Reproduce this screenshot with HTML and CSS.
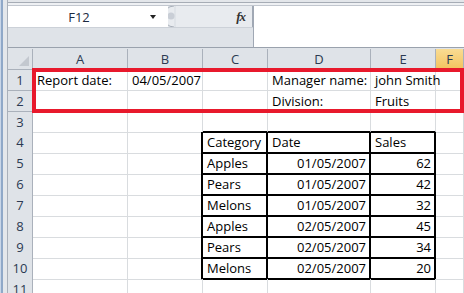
FILE: index.html
```html
<!DOCTYPE html>
<html>
<head>
<meta charset="utf-8">
<link rel="stylesheet" href="styles.css">
</head>
<body>
<div class="app">
  <div class="topstrip"></div>
  <div class="fbar">
    <div class="fleft">
      <div class="frow">
        <div class="namebox"><span class="nametext">F12</span><span class="ddarrow"></span></div>
        <svg class="grip" width="14" height="21" viewBox="0 0 14 21"><path d="M12 0 A10 10 0 0 0 12 21" fill="#e8ebef" stroke="#a9b0ba" stroke-width="1"/><circle cx="9" cy="10" r="3.5" fill="#c9ced6"/></svg>
        <div class="fxzone"><span class="fx">fx</span></div>
      </div>
      <div class="frow2"></div>
    </div>
    <div class="finput"></div>
  </div>
  <div class="sheet">
    <div class="row hdr">
      <div class="corner"><span class="tri"></span></div>
      <div class="ch">A</div><div class="ch">B</div><div class="ch">C</div><div class="ch">D</div><div class="ch">E</div><div class="ch sel">F</div>
    </div>
    <div class="row"><div class="rh">1</div><div class="c">Report date:</div><div class="c">04/05/2007</div><div class="c"></div><div class="c">Manager name:</div><div class="c">john Smith</div><div class="c"></div></div>
    <div class="row"><div class="rh">2</div><div class="c"></div><div class="c"></div><div class="c"></div><div class="c">Division:</div><div class="c">Fruits</div><div class="c"></div></div>
    <div class="row r3"><div class="rh">3</div><div class="c"></div><div class="c"></div><div class="c bb"></div><div class="c bb"></div><div class="c bb"></div><div class="c"></div></div>
    <div class="row"><div class="rh">4</div><div class="c"></div><div class="c br"></div><div class="c t">Category</div><div class="c t">Date</div><div class="c t">Sales</div><div class="c"></div></div>
    <div class="row"><div class="rh">5</div><div class="c"></div><div class="c br"></div><div class="c t">Apples</div><div class="c t n">01/05/2007</div><div class="c t n">62</div><div class="c"></div></div>
    <div class="row"><div class="rh">6</div><div class="c"></div><div class="c br"></div><div class="c t">Pears</div><div class="c t n">01/05/2007</div><div class="c t n">42</div><div class="c"></div></div>
    <div class="row"><div class="rh">7</div><div class="c"></div><div class="c br"></div><div class="c t">Melons</div><div class="c t n">01/05/2007</div><div class="c t n">32</div><div class="c"></div></div>
    <div class="row"><div class="rh">8</div><div class="c"></div><div class="c br"></div><div class="c t">Apples</div><div class="c t n">02/05/2007</div><div class="c t n">45</div><div class="c"></div></div>
    <div class="row"><div class="rh">9</div><div class="c"></div><div class="c br"></div><div class="c t">Pears</div><div class="c t n">02/05/2007</div><div class="c t n">34</div><div class="c"></div></div>
    <div class="row"><div class="rh">10</div><div class="c"></div><div class="c br"></div><div class="c t">Melons</div><div class="c t n">02/05/2007</div><div class="c t n">20</div><div class="c"></div></div>
    <div class="row last"><div class="rh">11</div><div class="c"></div><div class="c"></div><div class="c"></div><div class="c"></div><div class="c"></div><div class="c"></div></div>
  </div>
  <div class="redbox"></div>
</div>
</body>
</html>
```
FILE: styles.css
```css
html, body { margin: 0; padding: 0; }
body {
  width: 464px; height: 293px; overflow: hidden;
  background: #dfe3e8;
  font-family: "Open Sans", "Liberation Sans", sans-serif;
}
.app {
  position: relative;
  width: 464px; height: 293px; overflow: hidden;
  background: linear-gradient(to right, #c9d6e8 0, #c9d6e8 1px, #8fa8c8 1px, #8fa8c8 3px, #e4e7eb 3px, #e4e7eb 7px, #a9b0ba 7px, #a9b0ba 8px, #dfe3e8 8px);
  display: flex; flex-direction: column;
}
.topstrip {
  height: 6px; flex: none;
  margin-left: 8px;
  box-sizing: border-box;
  border-bottom: 1px solid #c2c7cf;
  background: linear-gradient(#e3e6ea 0, #e3e6ea 2px, #a6acb5 2px, #a6acb5 3px, #eef0f3 3px);
}
.fbar { height: 42px; flex: none; display: flex; margin-left: 8px; }
.fleft { width: 245px; display: flex; flex-direction: column; }
.frow { height: 21px; display: flex; }
.frow2 { flex: 1; background: #dfe3e8; border-top: 1px solid #ccd1d8; border-bottom: 1px solid #9aa2ad; }
.namebox { width: 160px; background: #fff; position: relative; display: flex; align-items: center; }
.nametext { width: 142px; text-align: center; font-size: 13px; color: #1b2a40; }
.ddarrow { width: 0; height: 0; border-left: 3px solid transparent; border-right: 3px solid transparent; border-top: 4px solid #222; }
.grip { flex: none; display: block; margin-left: -6px; }
.fxzone { flex: 1; background: #e8ebef; display: flex; align-items: center; justify-content: flex-end; padding-right: 7px; border-right: 1px solid #a0a8b4; }
.fx { font-family: "Liberation Serif", serif; font-style: italic; font-weight: bold; font-size: 13px; color: #333; letter-spacing: -1px; }
.finput { flex: 1; background: #fff; border-left: 1px solid #a0a8b4; border-bottom: 1px solid #9aa2ad; }
.sheet { margin-left: 8px; margin-top: 1px; background: #fff; flex: none; }
.row {
  display: grid;
  grid-template-columns: 25px 95px 75px 65px 103px 65px 1fr;
  height: 21px;
}
.row.r3 { height: 20px; }
.hdr > div { background: #dfe3e8; border-right: 1px solid #aab1bb; border-bottom: 1px solid #aab1bb; box-sizing: border-box; text-align: center; font-size: 13px; line-height: 20px; color: #2b3a52; }
.hdr .sel { background: linear-gradient(#f9dc93, #f3c35f); border-bottom-color: #c9a050; }
.corner { position: relative; }
.tri { position: absolute; right: 3px; bottom: 3px; width: 0; height: 0; border-left: 10px solid transparent; border-bottom: 10px solid #c3c8cf; }
.rh { background: #dfe3e8; border-right: 1px solid #aab1bb; border-bottom: 1px solid #aab1bb; box-sizing: border-box; text-align: center; font-size: 13px; line-height: 20px; color: #2b3a52; }
.c { border-right: 1px solid #d9dcdf; border-bottom: 1px solid #d9dcdf; box-sizing: border-box; font-size: 13px; line-height: 19px; padding: 1px 3px 0 4px; white-space: nowrap; color: #000; }
.c.bb { border-bottom: 2px solid #000; }
.c.br { border-right: 2px solid #000; }
.c.t { border-right: 2px solid #000; border-bottom: 2px solid #000; }
.c.n { text-align: right; }
.redbox { position: absolute; left: 32px; top: 68px; width: 432px; height: 45px; box-sizing: border-box; border: 4px solid #e8192c; }
```
